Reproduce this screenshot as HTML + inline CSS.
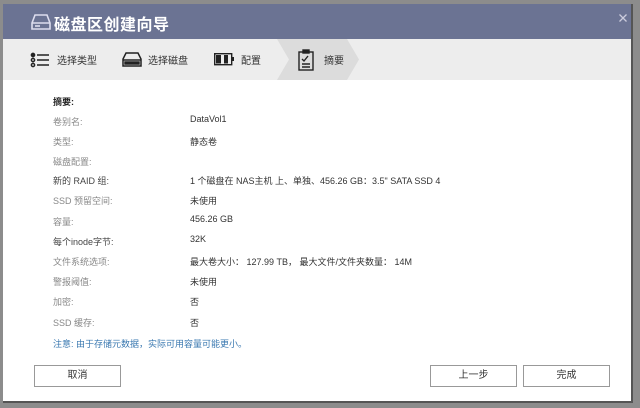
<!DOCTYPE html>
<html><head><meta charset="utf-8"><style>
*{margin:0;padding:0;box-sizing:border-box}
body{width:640px;height:408px;background:#8c8c8c;position:relative;overflow:hidden;font-family:"Liberation Sans","Noto Sans CJK SC",sans-serif}
.dlg{position:absolute;left:3px;top:4px;width:630px;height:399px;background:#fff;border-right:2px solid #555;border-bottom:2px solid #555}
.title{position:absolute;left:0;top:0;width:628px;height:35px;background:#6b7393;color:#fff;font-size:16px;font-weight:bold}
.title span{position:absolute;left:51px;top:7px;letter-spacing:.5px}
.steps{position:absolute;left:0;top:35px;width:628px;height:41px;background:#ededed}
.st{position:absolute;top:13px;font-size:10px;color:#333}
.r{position:absolute;font-size:9px;color:#888}
.v{position:absolute;left:187px;font-size:9px;color:#333}
.btn{position:absolute;top:361px;height:22px;border:1px solid #999;background:#fff;font-size:10px;color:#333;text-align:center;line-height:20px}
</style></head><body>
<div class="dlg">
<div class="title">
<svg style="position:absolute;left:28px;top:9px" width="20" height="18" viewBox="0 0 20 18" fill="none" stroke="#dde" stroke-width="1.6"><path d="M4 2h12l3 8v6H1v-6z"/><path d="M1 10h18"/><path d="M4 13h5"/></svg>
<span>磁盘区创建向导</span>
<svg style="position:absolute;left:616px;top:10px" width="8" height="8" viewBox="0 0 8 8" stroke="#ccd" stroke-width="1.3"><path d="M0.5 0.5l7 7M7.5 0.5l-7 7"/></svg>
</div>
<div class="steps">
<svg style="position:absolute;left:274px;top:0" width="82" height="41"><path d="M0 0h70l12 20.5L70 41H0l12-20.5z" fill="#dcdcdc"/></svg>
<svg style="position:absolute;left:27px;top:13px" width="20" height="16" stroke="#222" stroke-width="1.5" fill="none"><circle cx="3" cy="3" r="1.6" fill="#222"/><circle cx="3" cy="8" r="1.6"/><circle cx="3" cy="13" r="1.6"/><path d="M7 3h12M7 8h12M7 13h12"/></svg>
<div class="st" style="left:54px">选择类型</div>
<svg style="position:absolute;left:119px;top:13px" width="20" height="15" fill="none" stroke="#222" stroke-width="1.5"><path d="M4 1h12l3 6v7H1V7z"/><path d="M1 8h18"/><rect x="3" y="10" width="14" height="2" fill="#222"/></svg>
<div class="st" style="left:145px">选择磁盘</div>
<svg style="position:absolute;left:211px;top:14px" width="20" height="13"><rect x="0.7" y="0.7" width="17" height="11" fill="none" stroke="#222" stroke-width="1.4"/><rect x="2" y="2" width="5" height="8.5" fill="#222"/><rect x="10" y="2" width="4" height="8.5" fill="#222"/><rect x="18" y="4" width="2" height="4" fill="#222"/></svg>
<div class="st" style="left:238px">配置</div>
<svg style="position:absolute;left:295px;top:10px" width="16" height="22" fill="none" stroke="#222" stroke-width="1.4"><rect x="1" y="3" width="14" height="18"/><rect x="5" y="1" width="6" height="3" fill="#222"/><path d="M4 10l2 2 4-5M4 15h8M4 18h8"/></svg>
<div class="st" style="left:321px">摘要</div>
</div>
<div class="r" style="left:50px;top:91px;color:#222;font-weight:bold">摘要:</div>
<div class="r" style="left:50px;top:111px">卷别名:</div><div class="v" style="top:110px">DataVol1</div>
<div class="r" style="left:50px;top:131px">类型:</div><div class="v" style="top:131px">静态卷</div>
<div class="r" style="left:50px;top:151px">磁盘配置:</div>
<div class="r" style="left:50px;top:170px;color:#444">新的 RAID 组:</div><div class="v" style="top:170px">1 个磁盘在 NAS主机 上、单独、456.26 GB：3.5" SATA SSD 4</div>
<div class="r" style="left:50px;top:190px">SSD 预留空间:</div><div class="v" style="top:190px">未使用</div>
<div class="r" style="left:50px;top:211px">容量:</div><div class="v" style="top:210px">456.26 GB</div>
<div class="r" style="left:50px;top:231px;color:#444">每个inode字节:</div><div class="v" style="top:230px">32K</div>
<div class="r" style="left:50px;top:251px">文件系统选项:</div><div class="v" style="top:251px">最大卷大小： 127.99 TB， 最大文件/文件夹数量： 14M</div>
<div class="r" style="left:50px;top:271px">警报阈值:</div><div class="v" style="top:271px">未使用</div>
<div class="r" style="left:50px;top:291px">加密:</div><div class="v" style="top:291px">否</div>
<div class="r" style="left:50px;top:312px">SSD 缓存:</div><div class="v" style="top:312px">否</div>
<div class="r" style="left:50px;top:333px;color:#3a78b0">注意: 由于存储元数据，实际可用容量可能更小。</div>
<div class="btn" style="left:31px;width:87px">取消</div>
<div class="btn" style="left:427px;width:87px">上一步</div>
<div class="btn" style="left:520px;width:87px">完成</div>
</div>
</body></html>
